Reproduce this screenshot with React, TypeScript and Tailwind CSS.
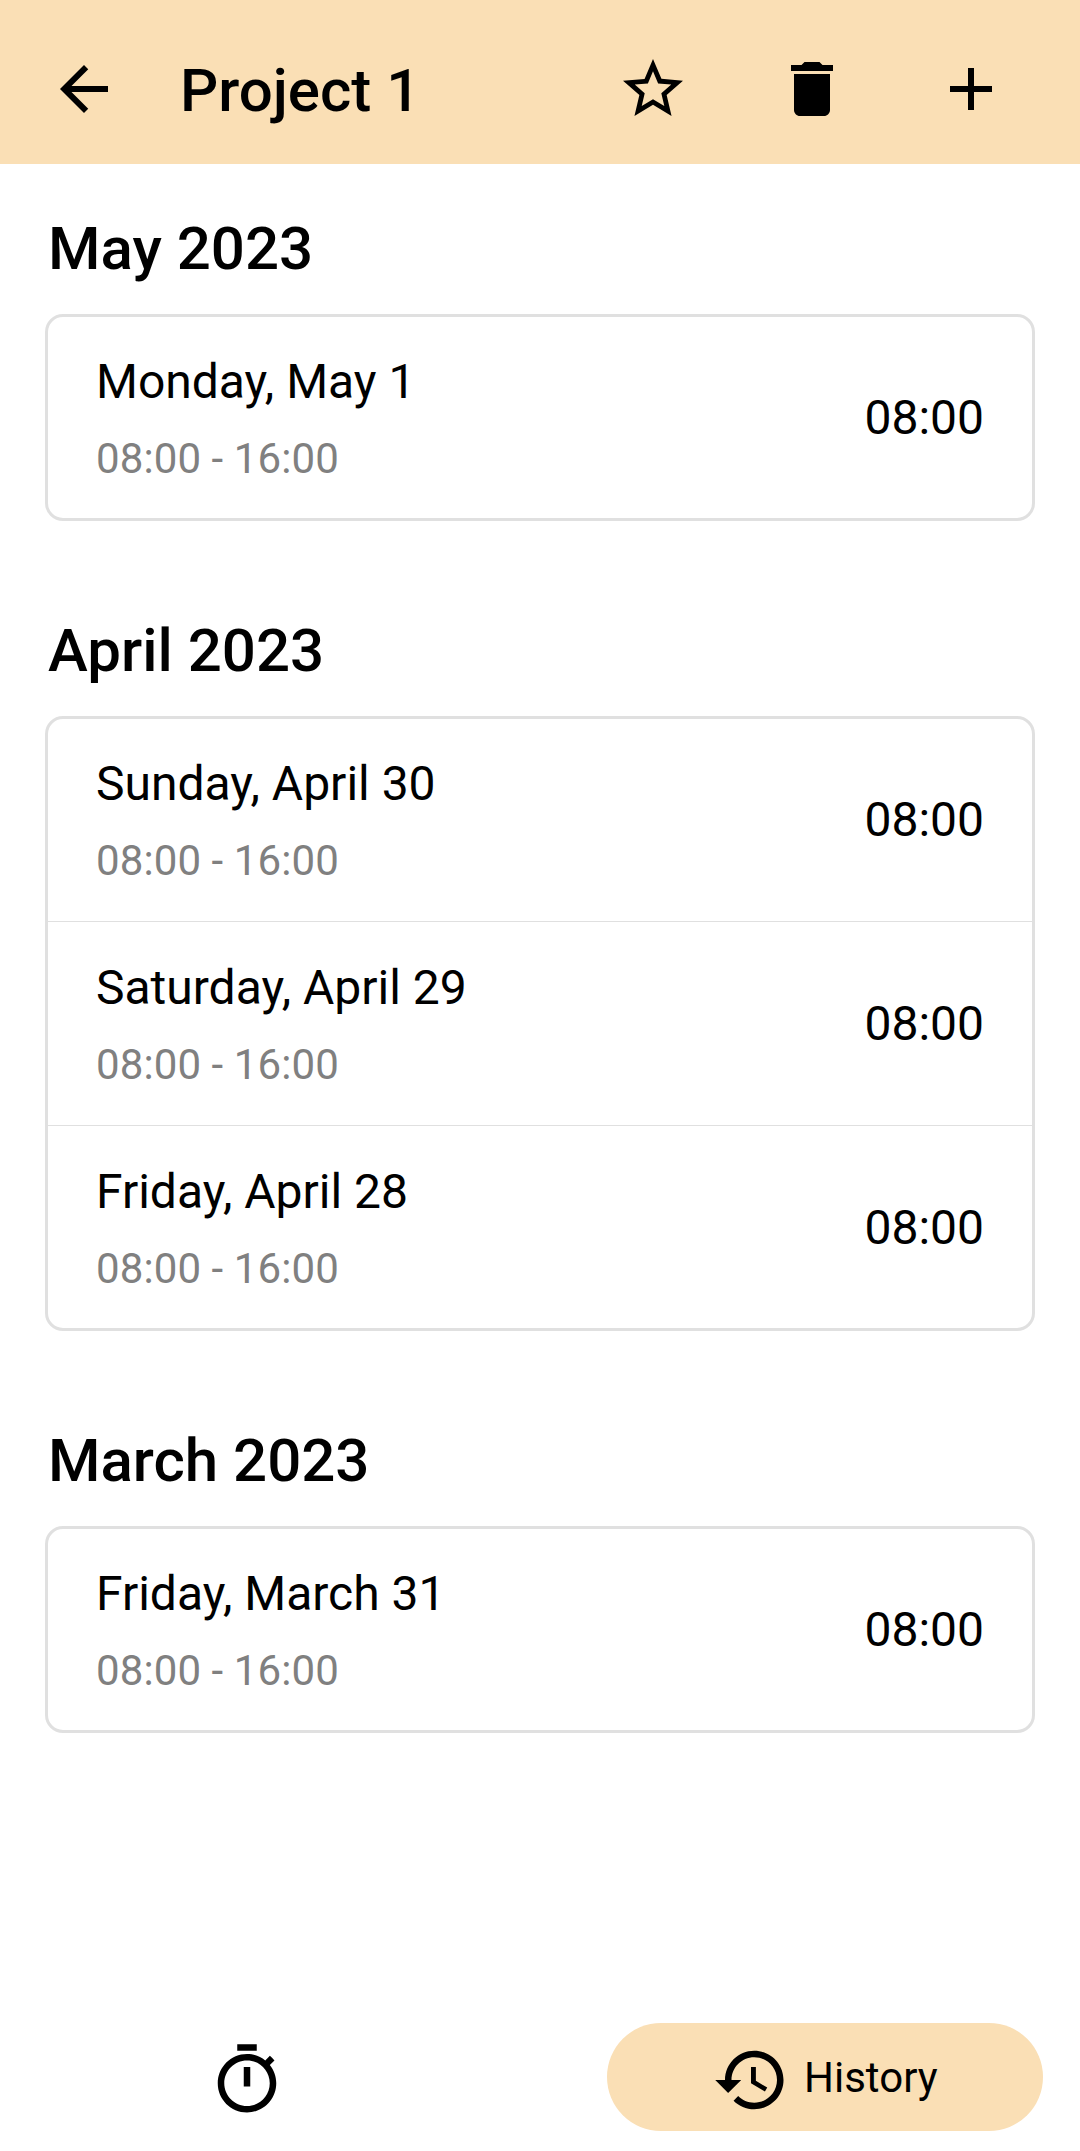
import React from "react";

const groups = [
  { month: "May 2023", days: ["Monday, May 1"] },
  { month: "April 2023", days: ["Sunday, April 30", "Saturday, April 29", "Friday, April 28"] },
  { month: "March 2023", days: ["Friday, March 31"] },
];

function Icon({ d, className }: { d: string; className: string }) {
  return (
    <svg viewBox="0 0 24 24" fill="currentColor" className={className}>
      <path d={d} />
    </svg>
  );
}

const BACK = "M20 11H7.83l5.59-5.59L12 4l-8 8 8 8 1.41-1.41L7.83 13H20v-2z";
const STAR =
  "M22 9.24l-7.19-.62L12 2 9.19 8.63 2 9.24l5.46 4.73L5.82 21 12 17.27 18.18 21l-1.63-7.03L22 9.24zM12 15.4l-3.76 2.27 1-4.28-3.32-2.88 4.38-.38L12 6.1l1.71 4.04 4.38.38-3.32 2.88 1 4.28L12 15.4z";
const TRASH = "M6 19c0 1.1.9 2 2 2h8c1.1 0 2-.9 2-2V7H6v12zM19 4h-3.5l-1-1h-5l-1 1H5v2h14V4z";
const PLUS = "M19 13h-6v6h-2v-6H5v-2h6V5h2v6h6v2z";
const TIMER =
  "M15 1H9v2h6V1zm-4 13h2V8h-2v6zm8.03-6.61l1.42-1.42c-.43-.51-.9-.99-1.41-1.41l-1.42 1.42C16.07 4.74 14.12 4 12 4c-4.97 0-9 4.03-9 9s4.02 9 9 9 9-4.03 9-9c0-2.12-.74-4.07-1.97-5.61zM12 20c-3.87 0-7-3.13-7-7s3.13-7 7-7 7 3.13 7 7-3.13 7-7 7z";
const HISTORY =
  "M13 3c-4.97 0-9 4.03-9 9H1l3.89 3.89.07.14L9 12H6c0-3.87 3.13-7 7-7s7 3.13 7 7-3.13 7-7 7c-1.93 0-3.68-.79-4.94-2.06l-1.42 1.42C8.27 19.99 10.51 21 13 21c4.97 0 9-4.03 9-9s-4.03-9-9-9zm-1 5v5l4.28 2.54.72-1.21-3.5-2.08V8H12z";

export default function App() {
  return (
    <div className="flex h-[2151px] w-[1080px] flex-col overflow-hidden bg-white font-[Roboto,sans-serif] text-black">
      <header className="flex h-[164px] shrink-0 items-center bg-[#fadfb5] pt-[14px] pr-[73px] pl-12">
        <Icon d={BACK} className="size-[72px]" />
        <h1 className="mt-[3px] ml-[60px] flex-1 text-[60px] leading-[71px] font-medium">Project 1</h1>
        <div className="flex items-center gap-[87px]">
          <Icon d={STAR} className="size-[72px]" />
          <Icon d={TRASH} className="size-[72px]" />
          <Icon d={PLUS} className="size-[72px]" />
        </div>
      </header>
      <main className="flex-1 px-[45px] pt-[49px]">
        {groups.map((g) => (
          <section key={g.month} className="mb-[94px]">
            <h2 className="mb-[30px] ml-[3px] text-[60px] leading-[71px] font-medium">{g.month}</h2>
            <ul className="rounded-[18px] border-[3px] border-[#e0e0e0]">
              {g.days.map((d) => (
                <li
                  key={d}
                  className="flex h-[204px] items-center justify-between border-t border-[#e0e0e0] pr-12 pl-12 first:-mt-[2px] first:border-transparent last:-mb-px"
                >
                  <div>
                    <p className="text-[48px] leading-[71px]">{d}</p>
                    <p className="mt-[11px] text-[42px] leading-[61px] tracking-[0.1px] text-[#808080]">08:00 - 16:00</p>
                  </div>
                  <span className="text-[48px] leading-[71px]">08:00</span>
                </li>
              ))}
            </ul>
          </section>
        ))}
      </main>
      <nav className="flex h-[128px] shrink-0">
        <button className="flex w-[607px] items-start pt-[18px] pl-[208px]">
          <Icon d={TIMER} className="size-[78px]" />
        </button>
        <button className="flex h-[108px] w-[436px] items-center gap-[14px] rounded-full bg-[#fadfb5] pl-[105px] text-[42px]">
          <Icon d={HISTORY} className="mt-[6px] size-[78px]" />
          <span className="mt-px leading-[61px]">History</span>
        </button>
      </nav>
    </div>
  );
}
